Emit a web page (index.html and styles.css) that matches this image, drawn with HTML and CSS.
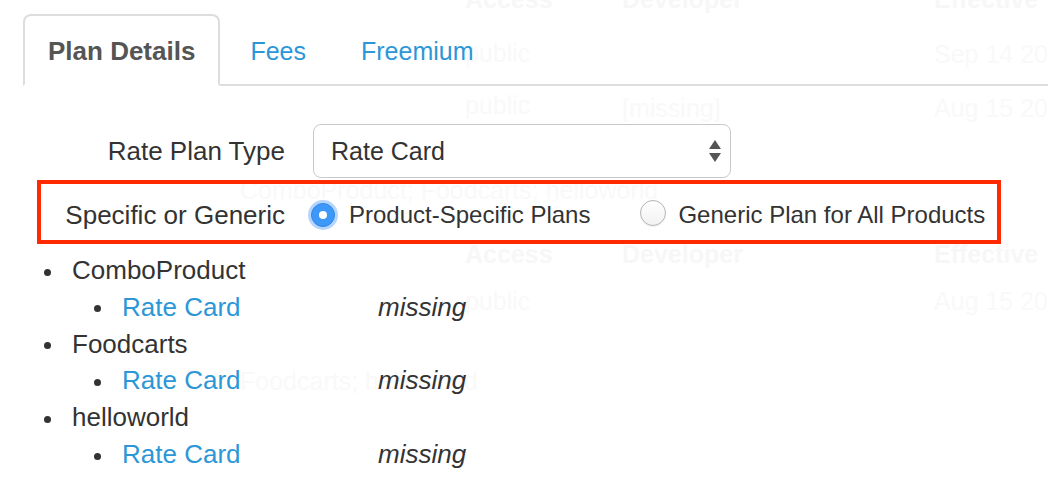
FILE: index.html
```html
<!DOCTYPE html>
<html lang="en">
<head>
<meta charset="utf-8">
<title>Plan Details</title>
<link rel="stylesheet" href="styles.css">
</head>
<body>
<div class="ghost" aria-hidden="true">
  <span class="g g-b" style="left:465px;top:-13px">Access</span>
  <span class="g g-b" style="left:622px;top:-13px">Developer</span>
  <span class="g g-b" style="left:934px;top:-13px">Effective</span>
  <span class="g" style="left:465px;top:41px">public</span>
  <span class="g" style="left:934px;top:42px">Sep 14 2017</span>
  <span class="g" style="left:465px;top:93px">public</span>
  <span class="g" style="left:622px;top:96px">[missing]</span>
  <span class="g" style="left:934px;top:96px">Aug 15 2017</span>
  <span class="g" style="left:240px;top:178px">ComboProduct; Foodcarts; helloworld</span>
  <span class="g g-b" style="left:465px;top:242px">Access</span>
  <span class="g g-b" style="left:622px;top:242px">Developer</span>
  <span class="g g-b" style="left:934px;top:242px">Effective</span>
  <span class="g" style="left:465px;top:289px">public</span>
  <span class="g" style="left:934px;top:289px">Aug 15 2017</span>
  <span class="g" style="left:240px;top:369px">Foodcarts; helloworld</span>
</div>

<div class="page">
  <ul class="tabs">
    <li class="tab active">Plan Details</li>
    <li class="tab"><a href="#">Fees</a></li>
    <li class="tab"><a href="#">Freemium</a></li>
  </ul>

  <div class="form">
    <div class="row">
      <span class="label">Rate Plan Type</span>
      <div class="select">
        <span>Rate Card</span>
        <svg class="arrows" width="12" height="22" viewBox="0 0 12 22">
          <polygon points="6,0 12,9 0,9" fill="#555"/>
          <polygon points="0,13 12,13 6,22" fill="#555"/>
        </svg>
      </div>
    </div>
    <div class="row highlight">
      <span class="label">Specific or Generic</span>
      <label class="radio first"><span class="dot checked"></span>Product-Specific Plans</label>
      <label class="radio second"><span class="dot"></span>Generic Plan for All Products</label>
    </div>
  </div>

  <ul class="products">
    <li>ComboProduct
      <ul class="plans">
        <li><a class="plan-link" href="#">Rate Card</a><em>missing</em></li>
      </ul>
    </li>
    <li>Foodcarts
      <ul class="plans">
        <li><a class="plan-link" href="#">Rate Card</a><em>missing</em></li>
      </ul>
    </li>
    <li>helloworld
      <ul class="plans">
        <li><a class="plan-link" href="#">Rate Card</a><em>missing</em></li>
      </ul>
    </li>
  </ul>
</div>
</body>
</html>
```

FILE: styles.css
```css
html, body {
  margin: 0;
  padding: 0;
  background: #fff;
}

body {
  width: 1048px;
  height: 482px;
  overflow: hidden;
  position: relative;
  font-family: "Liberation Sans", Arial, Helvetica, sans-serif;
  font-size: 25px;
  color: #333;
}

/* faded table behind the panel */
.ghost {
  position: absolute;
  left: 0;
  top: 0;
  right: 0;
  bottom: 0;
  z-index: 0;
  color: #f9f9f9;
  line-height: 25px;
  pointer-events: none;
}

.g {
  position: absolute;
  white-space: nowrap;
}

.g-b {
  font-weight: bold;
  color: #f7f7f7;
}

.page {
  position: relative;
  z-index: 1;
  padding: 14px 0 0 23px;
}

/* tabs */
.tabs {
  list-style: none;
  margin: 0;
  padding: 0;
  display: flex;
  border-bottom: 2px solid #ddd;
}

.tab {
  margin: 0 5px -2px 0;
  padding: 17px 23px 15px;
  border: 2px solid transparent;
  border-radius: 8px 8px 0 0;
  line-height: 36px;
  font-size: 25px;
}

.tab.active {
  border-color: #ddd;
  border-bottom-color: transparent;
  background: #fff;
  color: #555;
  font-weight: bold;
  font-size: 26px;
}

.tab a {
  color: #2b97d7;
  text-decoration: none;
}

/* form */
.form {
  margin: 38px 0 0 14px;
  width: 964px;
}

.row {
  display: flex;
  align-items: center;
  padding: 0 4px;
}

.label {
  width: 244px;
  flex-shrink: 0;
  text-align: right;
  line-height: 36px;
  font-size: 26px;
}

.select {
  margin-left: 28px;
  width: 418px;
  height: 54px;
  box-sizing: border-box;
  border: 1px solid #c9c9c9;
  border-radius: 8px;
  background: #fff;
  display: flex;
  align-items: center;
  justify-content: space-between;
  padding: 0 9px 0 17px;
  color: #333;
  font-size: 25px;
}

.arrows {
  display: block;
}

.highlight {
  margin-top: 2px;
  border: 4px solid #ff2a00;
  padding: 6px 0 0;
  height: 64px;
  box-sizing: border-box;
}

.radio {
  display: flex;
  align-items: center;
  line-height: 36px;
  font-size: 24px;
  white-space: nowrap;
}

.radio.first {
  margin-left: 26px;
}

.radio.second {
  margin-left: 50px;
}

.dot {
  width: 26px;
  height: 26px;
  box-sizing: border-box;
  border-radius: 50%;
  border: 1px solid #b4b4b4;
  background: linear-gradient(#ffffff, #f1f1f1);
  box-shadow: 0 1px 1px rgba(0, 0, 0, 0.06);
  margin-right: 12px;
  margin-top: -4px;
  flex-shrink: 0;
  position: relative;
}

.dot.checked {
  width: 24px;
  height: 24px;
  border: 1px solid #2f86e8;
  background: #3d98f8;
  box-shadow: 0 0 0 3px rgba(122, 176, 250, 0.55);
  margin-right: 14px;
  margin-top: 0;
}

.dot.checked::after {
  content: "";
  position: absolute;
  left: 50%;
  top: 50%;
  width: 8px;
  height: 8px;
  margin: -4px 0 0 -4px;
  border-radius: 50%;
  background: #fff;
}

/* product list */
.products,
.plans {
  list-style: none;
  margin: 0;
}

.products {
  margin-top: 8px;
  padding-left: 49px;
  font-size: 26px;
}

.plans {
  padding-left: 50px;
}

.products li {
  line-height: 36.8px;
}

.products li::before {
  content: "";
  display: inline-block;
  width: 7px;
  height: 7px;
  border-radius: 50%;
  background: #333;
  margin: 0 21px 0 -28px;
  vertical-align: middle;
}

.plan-link {
  display: inline-block;
  width: 256px;
  color: #2b97d7;
  text-decoration: none;
}

.plans em {
  font-style: italic;
  color: #333;
}
```
